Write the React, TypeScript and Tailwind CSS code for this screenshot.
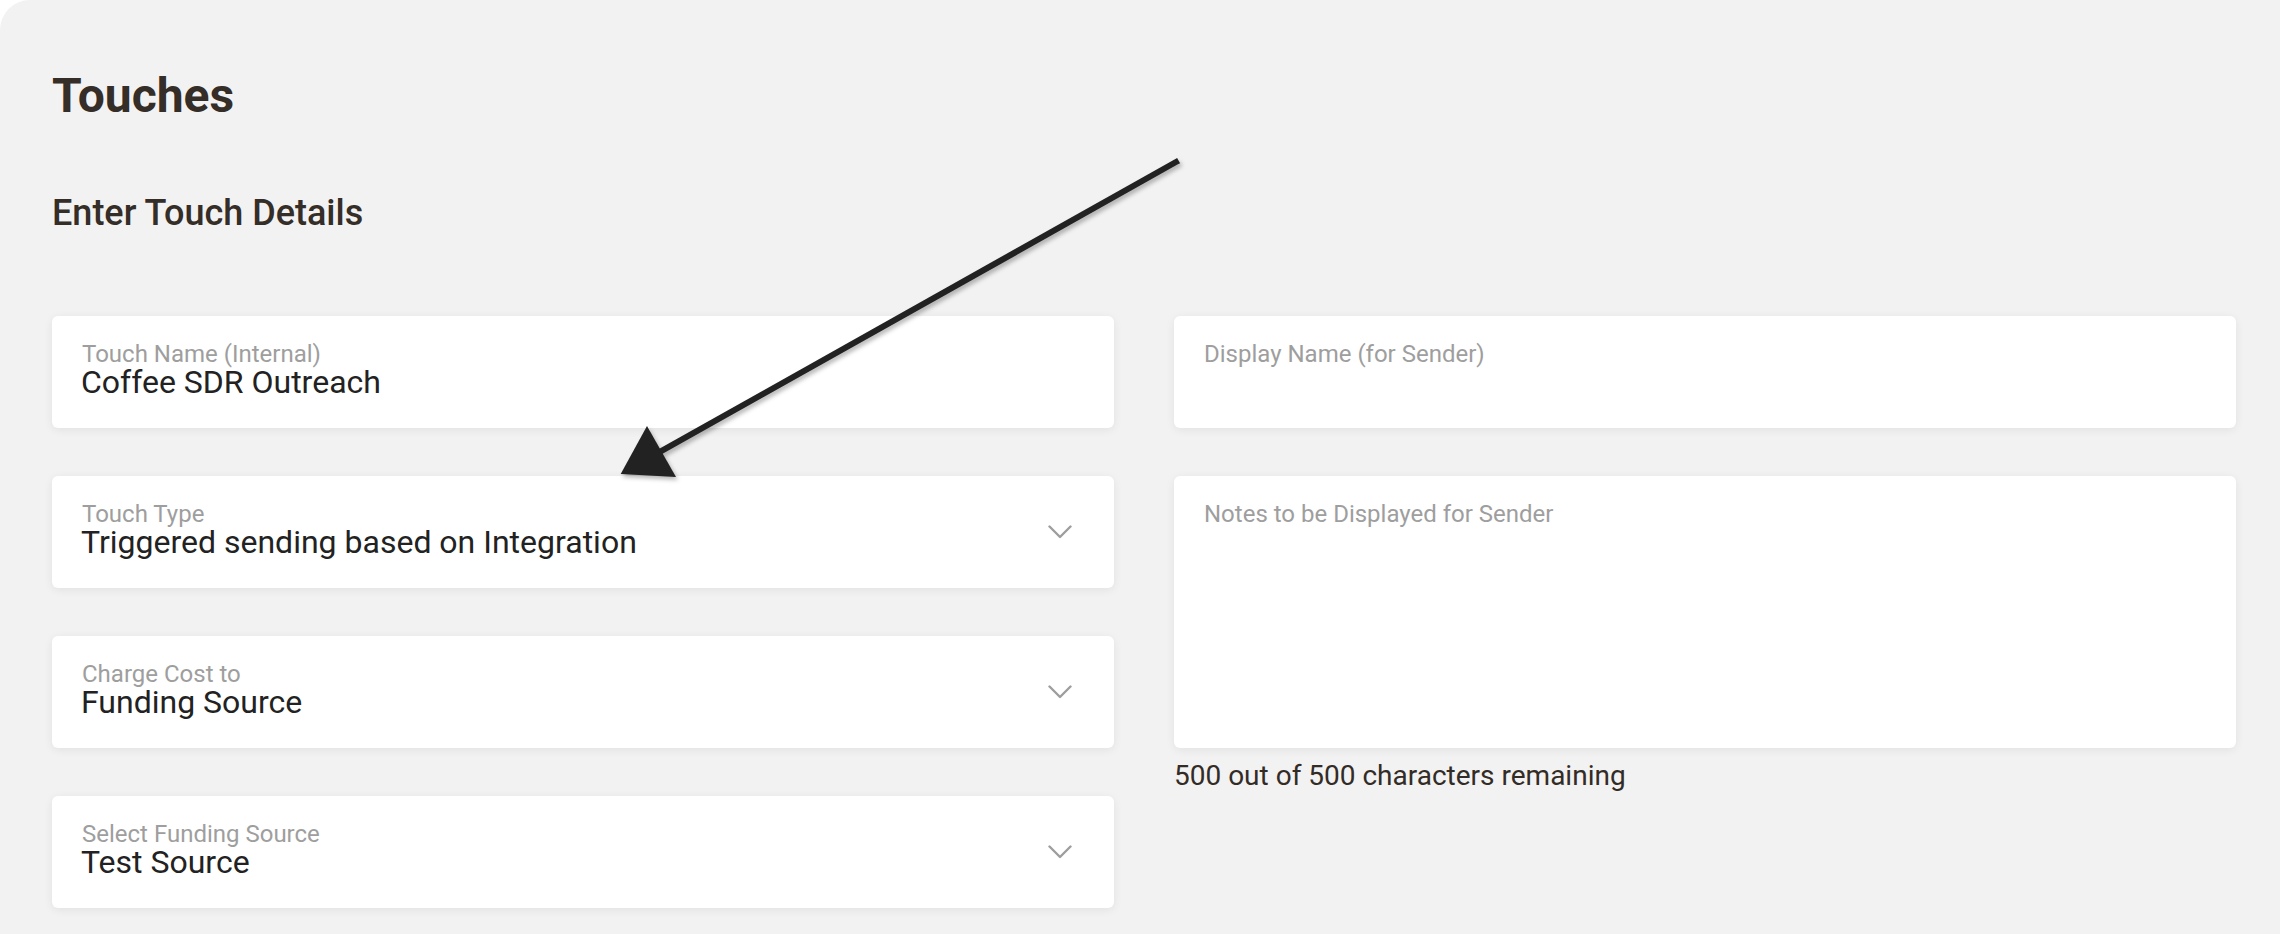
import React from "react";

function Chevron() {
  return (
    <svg width="24" height="14" viewBox="0 0 24 14" className="self-center shrink-0" fill="none">
      <polyline points="1.5,1.5 12,12 22.5,1.5" stroke="#9e9e9e" strokeWidth="2.4" strokeLinecap="round" strokeLinejoin="round" />
    </svg>
  );
}

function Field({ label, value, select }: { label: string; value?: string; select?: boolean }) {
  return (
    <div className="flex h-[112px] rounded-[6px] bg-white pl-[30px] pr-[42px] shadow-[0_2px_10px_rgba(0,0,0,0.07)]">
      <div className="flex-1 pt-[26px]">
        <div className="text-[24px] leading-[24px] text-[#9e9e9e]">{label}</div>
        {value && <div className="-ml-[1px] text-[32px] leading-[32px] text-[#222222]">{value}</div>}
      </div>
      {select && <Chevron />}
    </div>
  );
}

export default function App() {
  return (
    <div className="h-[934px] w-full overflow-hidden bg-white" style={{ fontFamily: "Roboto, 'Noto Sans', sans-serif" }}>
      <div className="relative h-full w-full rounded-tl-[30px] bg-[#f2f2f2] pl-[52px] pr-[44px] pt-[72px]">
        <h1 className="text-[48px] font-bold leading-[48px] text-[#352d27]">Touches</h1>
        <h2 className="mt-[75px] text-[36px] font-medium leading-[36px] text-[#352d27]">Enter Touch Details</h2>
        <div className="mt-[85px] grid grid-cols-2 gap-x-[60px]">
          <div className="flex flex-col gap-[48px]">
            <Field label="Touch Name (Internal)" value="Coffee SDR Outreach" />
            <Field label="Touch Type" value="Triggered sending based on Integration" select />
            <Field label="Charge Cost to" value="Funding Source" select />
            <Field label="Select Funding Source" value="Test Source" select />
          </div>
          <div className="flex flex-col">
            <Field label="Display Name (for Sender)" />
            <div className="mt-[48px] h-[272px] rounded-[6px] bg-white px-[30px] pt-[26px] shadow-[0_2px_10px_rgba(0,0,0,0.07)]">
              <div className="text-[24px] leading-[24px] text-[#9e9e9e]">Notes to be Displayed for Sender</div>
            </div>
            <div className="mt-[14px] text-[28px] leading-[28px] text-[#332c26]">500 out of 500 characters remaining</div>
          </div>
        </div>
        <svg className="pointer-events-none absolute left-0 top-0" width="2280" height="934" viewBox="0 0 2280 934" style={{ filter: "drop-shadow(2px 3px 2px rgba(0,0,0,0.28))" }}>
          <line x1="1176" y1="162" x2="658" y2="453" stroke="#222222" strokeWidth="6" strokeLinecap="square" />
          <polygon points="620.7,474 647,426 676,477" fill="#222222" />
        </svg>
      </div>
    </div>
  );
}
